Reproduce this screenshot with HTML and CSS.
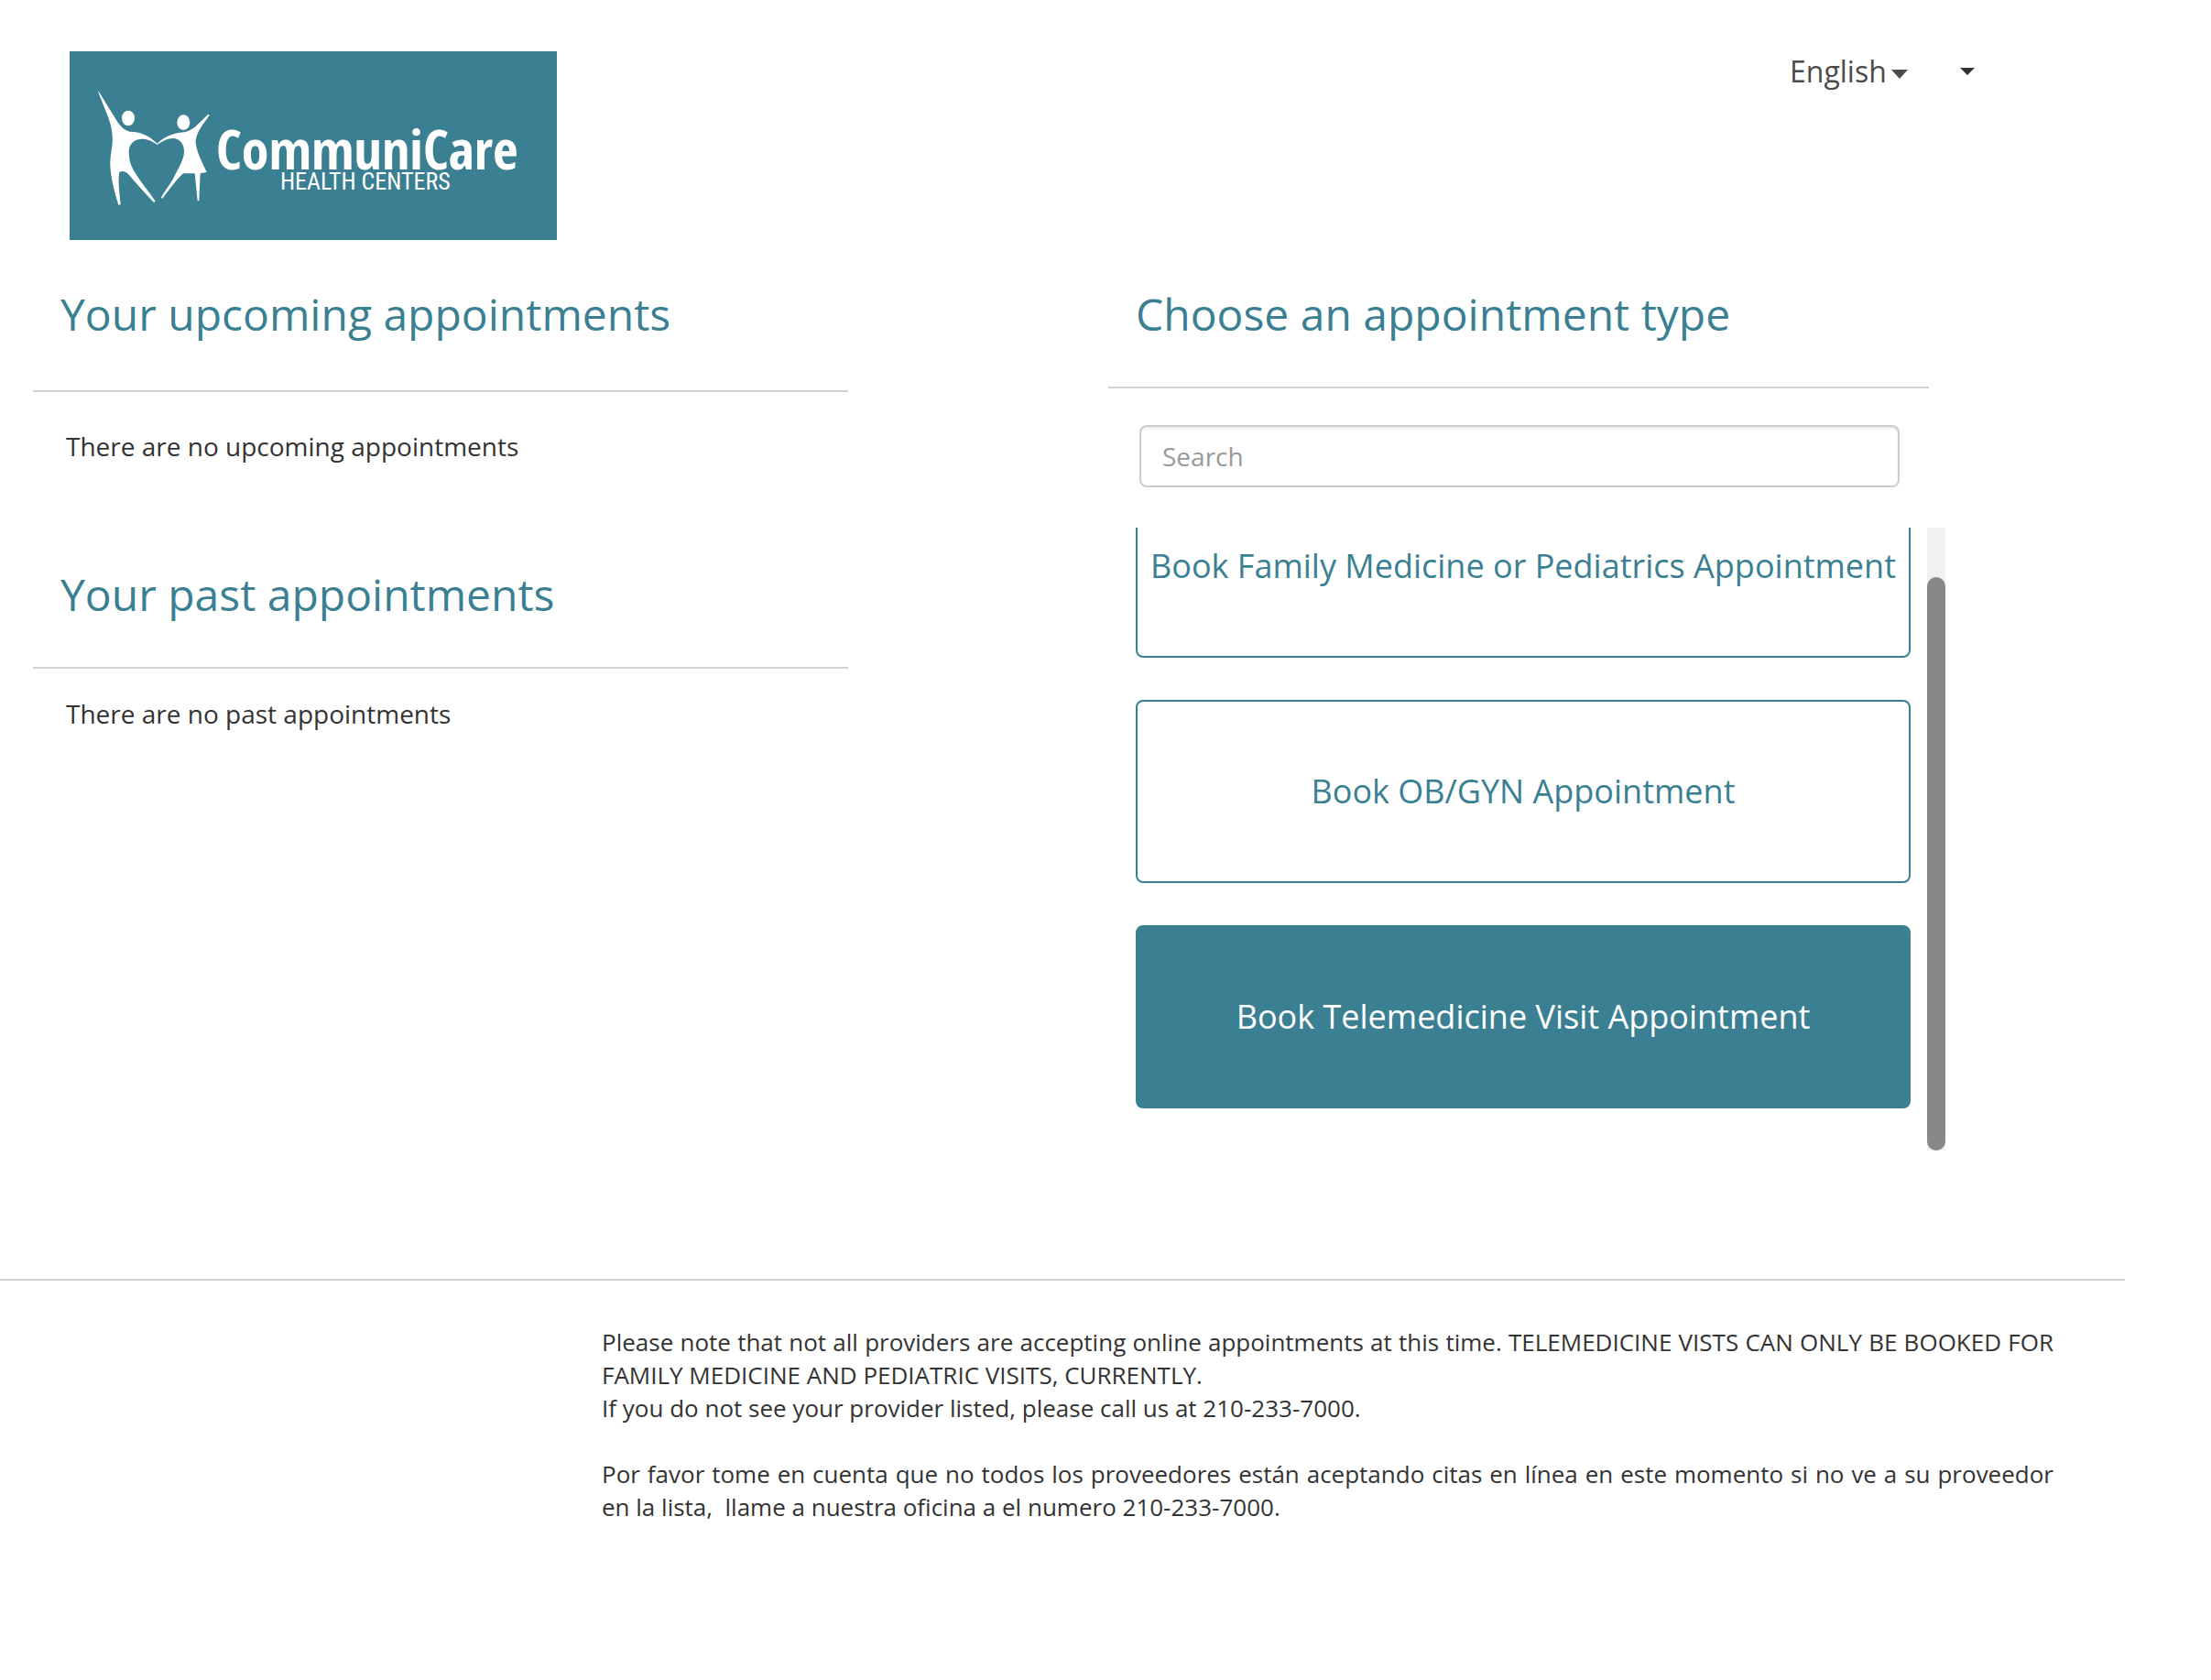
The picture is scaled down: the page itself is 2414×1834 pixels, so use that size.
FILE: index.html
```html
<!DOCTYPE html>
<html lang="en">
<head>
  <meta charset="utf-8">
  <meta name="viewport" content="width=device-width, initial-scale=1">
  <title>CommuniCare Health Centers</title>
  <link rel="stylesheet" href="styles.css">
</head>
<body>
  <header class="header">
    <svg class="logo" viewBox="0 0 532 206" role="img" aria-label="CommuniCare Health Centers">
      <rect width="532" height="206" fill="#3b7f92"/>
      <g fill="#fff" transform="translate(14 24) scale(.33333)">
        <ellipse cx="150" cy="147" rx="21" ry="25"/>
        <ellipse cx="331" cy="161" rx="21" ry="25"/>
        <path d="M50 57 C54 60 60 70 66 80 L106 145 C118 165 130 184 154 191 C190 191 218 204 245 230 C268 208 296 196 334 193 C352 188 366 180 378 167 L412 134 L416 137 L392 171 C376 195 371 212 371 228 C376 264 392 290 407 324 L386 328 L382 418 L377 418 L368 328 L330 328 C306 350 284 382 262 410 L257 408 C270 384 288 362 298 344 C314 310 334 282 333 254 C332 230 318 215 300 213 C280 212 262 222 245 234 C228 222 208 213 188 216 C164 219 152 236 152 258 C153 290 160 306 174 328 C192 358 216 386 239 419 L234 423 C204 392 176 360 152 332 C142 320 128 318 121 324 C116 350 121 390 125 430 L118 431 C106 392 94 350 91 304 C90 264 101 236 98 206 C96 168 84 144 74 118 Z"/>
      </g>
      <text class="logo-name" x="160" y="129">CommuniCare</text>
      <text class="logo-sub" x="230" y="151">HEALTH CENTERS</text>
    </svg>
    <div class="header-menus">
      <label class="language">
        <select class="language-select" aria-label="Language">
          <option>English</option>
        </select>
        <span class="caret"></span>
      </label>
      <button class="account" type="button" aria-label="Account menu"><span class="caret caret-small"></span></button>
    </div>
  </header>

  <main class="content">
    <div class="column">
      <section class="appointments">
        <h2 class="heading">Your upcoming appointments</h2>
        <p class="empty">There are no upcoming appointments</p>
      </section>
      <section class="appointments appointments-past">
        <h2 class="heading">Your past appointments</h2>
        <p class="empty">There are no past appointments</p>
      </section>
    </div>

    <section class="column">
      <h2 class="heading heading-types">Choose an appointment type</h2>
      <input class="search" type="search" placeholder="Search" aria-label="Search appointment types">
      <div class="types">
        <div class="types-view">
          <div class="types-list">
            <button class="type" type="button">Book Family Medicine or Pediatrics Appointment</button>
            <button class="type" type="button">Book OB/GYN Appointment</button>
            <button class="type type-active" type="button">Book Telemedicine Visit Appointment</button>
          </div>
        </div>
        <div class="scrollbar" aria-hidden="true">
          <div class="scrollbar-thumb"></div>
        </div>
      </div>
    </section>
  </main>

  <footer class="footer">
    <p class="note">Please note that not all providers are accepting online appointments at this time. TELEMEDICINE VISTS CAN ONLY BE BOOKED FOR FAMILY MEDICINE AND PEDIATRIC VISITS, CURRENTLY.</p>
    <p class="note">If you do not see your provider listed, please call us at 210-233-7000.</p>
    <p class="note note-spanish" lang="es">Por favor tome en cuenta que no todos los proveedores están aceptando citas en línea en este momento si no ve a su proveedor en la lista,&nbsp; llame a nuestra oficina a el numero 210-233-7000.</p>
  </footer>
</body>
</html>
```

FILE: styles.css
```css
:root {
  --teal: #3b7f92;
  --text: #333;
  --rule: #d2d2d2;
}

* {
  box-sizing: border-box;
}

body {
  margin: 0;
  background: #fff;
  color: var(--text);
  font: 28px/40px "Open Sans", sans-serif;
}

h2,
p {
  margin: 0;
  font-weight: 400;
}

/* Header */
.header {
  display: flex;
  justify-content: space-between;
  align-items: flex-start;
  padding: 56px 258px 0 76px;
}

.logo {
  display: block;
  width: 532px;
  height: auto;
}

.logo-name {
  fill: #fff;
  font: 700 60px "Open Sans Condensed", "Roboto Condensed", Lato, sans-serif;
}

.logo-sub {
  fill: #fff;
  font: 400 26px "Roboto Condensed", Lato, sans-serif;
}

.header-menus {
  display: flex;
  align-items: center;
  gap: 57px;
}

.language {
  display: flex;
  align-items: center;
  gap: 5px;
  color: #4b4b4b;
}

.language-select {
  appearance: none;
  padding: 0;
  border: 0;
  background: none;
  color: inherit;
  font: 32px/44px "Open Sans", sans-serif;
}

.caret {
  margin-top: 6px;
  border: solid transparent;
  border-width: 10px 9px 0;
  border-top-color: currentColor;
}

.caret-small {
  margin-top: 0;
  border-width: 8px 8px 0;
}

.account {
  display: flex;
  padding: 0;
  border: 0;
  background: none;
  color: var(--text);
}

/* Columns */
.content {
  display: grid;
  grid-template-columns: 890fr 914fr;
  gap: 284px;
  padding: 47px 290px 0 36px;
}

.column {
  min-width: 0;
}

.heading {
  padding: 0 30px 49px;
  border-bottom: 2px solid var(--rule);
  color: var(--teal);
  font-size: 48px;
  line-height: 68px;
}

.heading-types {
  margin-right: 18px;
  padding-bottom: 45px;
}

.empty {
  padding: 39px 36px 0;
}

.appointments-past {
  margin-top: 108px;
}

.appointments-past .heading {
  padding-bottom: 45px;
}

.appointments-past .empty {
  padding-top: 29px;
}

/* Appointment types */
.search {
  display: block;
  width: calc(100% - 84px);
  height: 68px;
  margin: 40px 0 44px 34px;
  padding: 0 23px;
  border: 2px solid #ccc;
  border-radius: 8px;
  background: #fff;
  box-shadow: inset 0 2px 2px rgba(0, 0, 0, .08);
  color: var(--text);
  font: inherit;
  appearance: none;
}

.search::placeholder {
  color: #999;
}

.types {
  display: flex;
  gap: 18px;
  height: 680px;
  margin-left: 30px;
}

/* A reversed column opens scrolled to its end */
.types-view {
  display: flex;
  flex: 1;
  flex-direction: column-reverse;
  overflow-y: auto;
  scrollbar-width: none;
}

.types-list {
  display: grid;
  flex: none;
  gap: 46px;
  padding-bottom: 46px;
}

.scrollbar {
  display: flex;
  flex-direction: column;
  justify-content: flex-end;
  width: 20px;
  background: #f1f1f1;
}

.scrollbar-thumb {
  height: 92%;
  border-radius: 10px;
  background: #888;
}

.type {
  min-height: 200px;
  padding: 0 12px;
  border: 2px solid var(--teal);
  border-radius: 8px;
  background: #fff;
  color: var(--teal);
  font: 36px/50px "Open Sans", sans-serif;
}

.type-active {
  background: var(--teal);
  color: #fff;
}

/* Footer */
.footer {
  margin: 140px 94px 0 0;
  padding: 49px 78px 160px 657px;
  border-top: 2px solid #d5d0d2;
  font-size: 26px;
  line-height: 36px;
}

.note {
  text-align: justify;
}

.note-spanish {
  margin-top: 36px;
}
```
